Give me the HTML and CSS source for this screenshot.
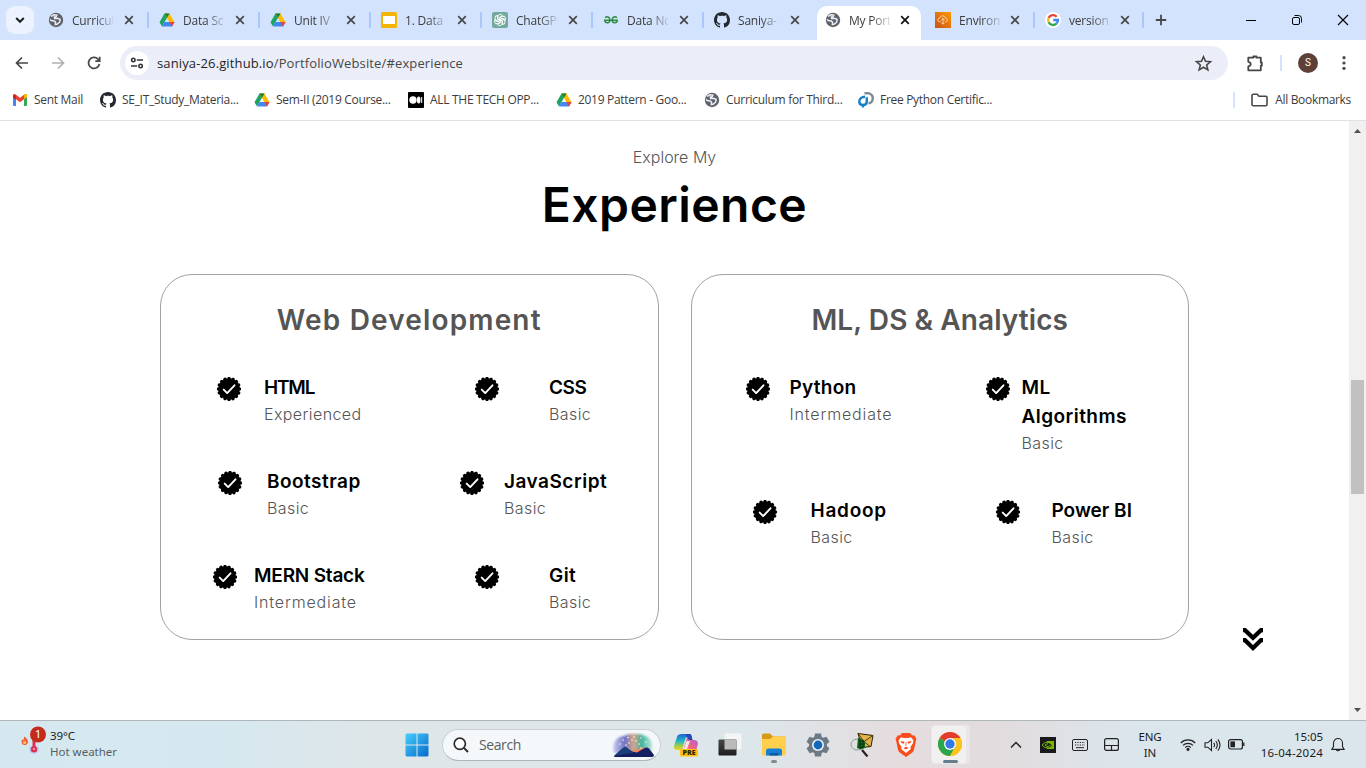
FILE: index.html
```html
<!DOCTYPE html>
<html lang="en">
<head>
<meta charset="utf-8">
<title>My Portfolio</title>
<link rel="stylesheet" href="styles.css">
</head>
<body>
<svg class="defs" width="0" height="0">
  <defs>
    <symbol id="globe" viewBox="0 0 16 16"><circle cx="8" cy="8" r="7.2" fill="#5f6368"/><path d="M3 4.4l3-1.6 2.800.4-.8 1.800H6.400l.2 1.600h4l1.600 1-.6 2.600-2.600 2.200-1.600.2.200-2.200-1.400-1.400-3-.4-1-1.400" fill="none" stroke="#e9edf7" stroke-width="1.5"/></symbol>
    <symbol id="drive" viewBox="0 0 16 16"><path d="M5.5 1.5h5L8 5.8 3 14.5.5 10.2z" fill="#1ea362"/><path d="M5.5 1.5h5l5 8.8h-5z" fill="#ffba00"/><path d="M3 14.5l2.5-4.4h10L13 14.5z" fill="#4285f4"/><path d="M5.5 1.5h5L8 5.8z" fill="#188038"/><path d="M10.4 10.1h5.1L13 14.5z" fill="#ea4335"/></symbol>
    <symbol id="github" viewBox="0 0 16 16"><path fill="#24292f" d="M8 0C3.58 0 0 3.58 0 8c0 3.54 2.29 6.53 5.47 7.59.4.07.55-.17.55-.38 0-.19-.01-.82-.01-1.49-2.01.37-2.53-.49-2.69-.94-.09-.23-.48-.94-.82-1.13-.28-.15-.68-.52-.01-.53.63-.01 1.08.58 1.23.82.72 1.21 1.87.87 2.33.66.07-.52.28-.87.51-1.07-1.78-.2-3.64-.89-3.64-3.95 0-.87.31-1.59.82-2.15-.08-.2-.36-1.02.08-2.12 0 0 .67-.21 2.2.82.64-.18 1.32-.27 2-.27s1.36.09 2 .27c1.53-1.04 2.2-.82 2.2-.82.44 1.1.16 1.92.08 2.12.51.56.82 1.27.82 2.15 0 3.07-1.87 3.75-3.65 3.95.29.25.54.73.54 1.48 0 1.07-.01 1.93-.01 2.2 0 .21.15.46.55.38A8.01 8.01 0 0016 8c0-4.42-3.58-8-8-8z"/></symbol>
    <symbol id="close" viewBox="0 0 10 10"><path d="M1.2 1.2l7.6 7.6M8.8 1.2L1.2 8.8" fill="none" stroke="currentColor" stroke-width="1.7"/></symbol>
    <symbol id="badge" viewBox="0 0 24 24"><circle cx="12" cy="12" r="10.7"/><circle cx="12" cy="12" r="10.4" fill="none" stroke="#000" stroke-width="3.4" pathLength="16" stroke-dasharray=".01 .99" stroke-linecap="round"/><path d="M6.7 12.6l3.500 3.500 7.300-7.800" fill="none" stroke="#fff" stroke-width="1.9" stroke-linecap="round" stroke-linejoin="round"/></symbol>
  </defs>
</svg>

<header class="browser">
  <div class="tabstrip">
    <span class="tab-search"><svg width="10" height="8" viewBox="0 0 10 8"><path d="M1.2 2l3.8 3.8L8.8 2" fill="none" stroke="#1f1f1f" stroke-width="2"/></svg></span>
    <nav class="tabs">
      <div class="tab"><svg class="fav"><use href="#globe"/></svg><span class="tab-title">Curricul</span><svg class="x"><use href="#close"/></svg></div>
      <div class="tab"><svg class="fav"><use href="#drive"/></svg><span class="tab-title">Data Sc</span><svg class="x"><use href="#close"/></svg></div>
      <div class="tab"><svg class="fav"><use href="#drive"/></svg><span class="tab-title">Unit IV</span><svg class="x"><use href="#close"/></svg></div>
      <div class="tab"><svg class="fav" viewBox="0 0 16 16"><rect width="16" height="16" rx="1.5" fill="#f5b400"/><rect x="2" y="4" width="12" height="8" fill="#fff"/></svg><span class="tab-title">1. Data</span><svg class="x"><use href="#close"/></svg></div>
      <div class="tab"><svg class="fav" viewBox="0 0 16 16"><rect width="16" height="16" rx="2" fill="#74aa9c"/><g fill="none" stroke="#fff" stroke-width=".9"><path id="petal" d="M6 8V4.7A2.5 2.5 0 0 1 10.6 3.5L7.8 5.1V8.8"/><use href="#petal" transform="rotate(60 8 8)"/><use href="#petal" transform="rotate(120 8 8)"/><use href="#petal" transform="rotate(180 8 8)"/><use href="#petal" transform="rotate(240 8 8)"/><use href="#petal" transform="rotate(300 8 8)"/></g></svg><span class="tab-title">ChatGP</span><svg class="x"><use href="#close"/></svg></div>
      <div class="tab"><svg class="fav" viewBox="0 0 16 16"><path d="M2.200 5.800C3.400 4.200 6.900 4.600 6.900 8c0 3.600-4.800 3.700-5.200.4M1 8.300h14M14.300 8.400c-.4 3.300-5.200 3.200-5.200-.4 0-3.400 3.500-3.800 4.700-2.200" fill="none" stroke="#2f8d46" stroke-width="1.500"/></svg><span class="tab-title">Data No</span><svg class="x"><use href="#close"/></svg></div>
      <div class="tab"><svg class="fav"><use href="#github"/></svg><span class="tab-title">Saniya-</span><svg class="x"><use href="#close"/></svg></div>
      <div class="tab tab--active"><svg class="fav"><use href="#globe"/></svg><span class="tab-title">My Port</span><svg class="x"><use href="#close"/></svg></div>
      <div class="tab tab--env"><svg class="fav" viewBox="0 0 16 16"><defs><linearGradient id="aws" x1="0" y1="1" x2="1" y2="0"><stop stop-color="#c8511b"/><stop offset="1" stop-color="#f90"/></linearGradient></defs><rect width="16" height="16" fill="url(#aws)"/><path d="M5.500 9.700H4.600a1.800 1.800 0 0 1 .1-3.600C5 3.300 9.400 3.100 10.100 5.700c2.300-.2 3 3.500.8 4H10.200M8 6.500v5.600M6.400 8.100L8 6.500l1.600 1.600M6.500 10.700L8 12.200l1.500-1.500" fill="none" stroke="#ffe9d0" stroke-width=".8"/></svg><span class="tab-title">Environ</span><svg class="x"><use href="#close"/></svg></div>
      <div class="tab tab--last"><svg class="fav" viewBox="0 0 16 16"><circle cx="8" cy="8" r="8" fill="#fff"/><g fill="none" stroke-width="2.3"><path d="M11.700 4.700A5 5 0 0 0 3.600 5.900" stroke="#ea4335"/><path d="M3.600 5.900a5 5 0 0 0 0 4.400" stroke="#fbbc05"/><path d="M3.600 10.300A5 5 0 0 0 11.400 11.700" stroke="#34a853"/><path d="M11.400 11.700A5 5 0 0 0 13 8H8.200" stroke="#4285f4"/></g></svg><span class="tab-title">version</span><svg class="x"><use href="#close"/></svg></div>
    </nav>
    <svg class="new-tab" width="12" height="12" viewBox="0 0 12 12"><path d="M6 .8v10.400M.8 6h10.400" stroke="#474747" stroke-width="1.8"/></svg>
    <div class="window-buttons">
      <svg width="12" height="12"><path d="M1 6.500h10" stroke="#000"/></svg>
      <svg width="12" height="12" fill="none" stroke="#000"><rect x="1.500" y="3.500" width="7" height="7" rx="1.500"/><path d="M3.500 1.500h4a3 3 0 0 1 3 3v4"/></svg>
      <svg width="12" height="12"><path d="M1 1l10 10M11 1L1 11" stroke="#000" stroke-width="1.100"/></svg>
    </div>
  </div>

  <div class="toolbar">
    <svg class="nav-icon" viewBox="0 0 14 14"><path d="M13 7H1.500M7 1.500L1.500 7 7 12.500" fill="none" stroke="#474747" stroke-width="1.700"/></svg>
    <svg class="nav-icon" viewBox="0 0 14 14"><path d="M1 7h11.500M7 1.500L12.500 7 7 12.500" fill="none" stroke="#b0b0b0" stroke-width="1.700"/></svg>
    <svg class="nav-icon" viewBox="0 0 14 14"><path d="M12.400 8A5.500 5.500 0 1 1 11 3.100l1.400 1.500M12.700.8v4.400H8.300" fill="none" stroke="#474747" stroke-width="1.700"/></svg>
    <div class="omnibox">
      <span class="site-info"><svg width="14" height="12" viewBox="0 0 14 12" fill="none" stroke="#30343a" stroke-width="1.600"><circle cx="3.300" cy="3" r="1.700"/><path d="M6.800 3H13M1 9h6.200"/><circle cx="10.600" cy="9" r="1.700"/></svg></span>
      <span class="url"><b>saniya-26.github.io</b>/PortfolioWebsite/#experience</span>
      <svg class="star" viewBox="0 0 16 16"><path d="M8 1.600l1.900 4.300 4.700.4-3.600 3.100 1.100 4.600L8 11.500 3.900 14 5 9.400 1.400 6.300l4.700-.4z" fill="none" stroke="#474747" stroke-width="1.500"/></svg>
    </div>
    <svg class="puzzle" viewBox="0 0 18 18"><path d="M2.300 3.700H7.300V2.500h3.200v1.200h4.300v4.800h1v3.200h-1v4.600H2.300v-3.900q2.400-.4 2.400-2.300T2.300 7.800z" fill="none" stroke="#474747" stroke-width="1.800" stroke-linejoin="round"/></svg>
    <i class="toolbar-sep"></i>
    <span class="avatar">S</span>
    <svg class="kebab" viewBox="0 0 4 14"><circle cx="2" cy="1.700" r="1.600"/><circle cx="2" cy="7" r="1.600"/><circle cx="2" cy="12.300" r="1.600"/></svg>
  </div>

  <div class="bookmarks">
    <a class="bm bm--mail"><svg class="fav" viewBox="0 0 16 16"><path d="M1 3.500h3V14H2a1 1 0 0 1-1-1z" fill="#4285f4"/><path d="M12 3.500h3V13a1 1 0 0 1-1 1h-2z" fill="#34a853"/><path d="M1 3.200c0-1.200 1.500-1.600 2.300-1L8 5.800l4.700-3.600c.8-.6 2.300-.2 2.300 1V5L8 10.300 1 5z" fill="#ea4335"/><path d="M12 2.700l.7-.5c.8-.6 2.300-.2 2.300 1V5l-3 2.300z" fill="#fbbc04"/><path d="M1 3.500v2l3 2.200V3z" fill="#c5221f"/></svg><span>Sent Mail</span></a>
    <a class="bm bm--study"><svg class="fav"><use href="#github"/></svg><span>SE_IT_Study_Materia...</span></a>
    <a class="bm bm--sem"><svg class="fav"><use href="#drive"/></svg><span>Sem-II (2019 Course...</span></a>
    <a class="bm bm--tech"><svg class="fav" viewBox="0 0 16 16"><rect width="16" height="16" rx="1"/><g fill="#fff"><circle cx="5" cy="8" r="3.700"/><ellipse cx="10.700" cy="8" rx="1.800" ry="3.500"/><rect x="13.200" y="5" width="1" height="6"/></g></svg><span>ALL THE TECH OPP...</span></a>
    <a class="bm bm--pattern"><svg class="fav"><use href="#drive"/></svg><span>2019 Pattern - Goo...</span></a>
    <a class="bm bm--third"><svg class="fav"><use href="#globe"/></svg><span>Curriculum for Third...</span></a>
    <a class="bm bm--python"><svg class="fav" viewBox="0 0 16 16" fill="none" stroke-width="2.400"><path d="M6.500 1.500c3.500-1 8.300 0 8.300 4.800 0 3-2 4.900-4.300 4.900" stroke="#808890"/><path d="M7 4.700C3.500 4.700 1.300 6.800 1.300 9.500c0 2 1.500 3.500 3.700 3.500 2.500 0 3.800-1.500 3.800-3.500V5.200M5 15.500V13" stroke="#1681c4"/></svg><span>Free Python Certific...</span></a>
    <div class="all-bookmarks"><svg width="17" height="14" viewBox="0 0 17 14"><path d="M1 2.400q0-1.200 1.200-1.200h4L8 3.200h6.800q1.200 0 1.200 1.200v7.200q0 1.200-1.200 1.200H2.200Q1 12.800 1 11.600z" fill="none" stroke="#474747" stroke-width="1.600"/></svg><span>All Bookmarks</span></div>
  </div>
</header>

<div class="viewport">
  <main class="experience">
    <p class="eyebrow">Explore My</p>
    <h1>Experience</h1>
    <div class="cards">
      <section class="card">
        <h2 class="t-web">Web Development</h2>
        <div class="skills">
          <article class="skill s-html"><svg class="check"><use href="#badge"/></svg><div><h3>HTML</h3><p>Experienced</p></div></article>
          <article class="skill s-css"><svg class="check"><use href="#badge"/></svg><div><h3>CSS</h3><p>Basic</p></div></article>
          <article class="skill s-bootstrap"><svg class="check"><use href="#badge"/></svg><div><h3>Bootstrap</h3><p>Basic</p></div></article>
          <article class="skill s-js"><svg class="check"><use href="#badge"/></svg><div><h3>JavaScript</h3><p>Basic</p></div></article>
          <article class="skill s-mern"><svg class="check"><use href="#badge"/></svg><div><h3>MERN Stack</h3><p class="wide">Intermediate</p></div></article>
          <article class="skill s-git"><svg class="check"><use href="#badge"/></svg><div><h3>Git</h3><p>Basic</p></div></article>
        </div>
      </section>
      <section class="card">
        <h2 class="t-ml">ML, DS &amp; Analytics</h2>
        <div class="skills">
          <article class="skill s-python"><svg class="check"><use href="#badge"/></svg><div><h3>Python</h3><p class="wide">Intermediate</p></div></article>
          <article class="skill s-ml"><svg class="check"><use href="#badge"/></svg><div><h3>ML<br>Algorithms</h3><p>Basic</p></div></article>
          <article class="skill s-hadoop"><svg class="check"><use href="#badge"/></svg><div><h3>Hadoop</h3><p>Basic</p></div></article>
          <article class="skill s-power"><svg class="check"><use href="#badge"/></svg><div><h3>Power BI</h3><p>Basic</p></div></article>
        </div>
      </section>
    </div>
    <svg class="down" viewBox="0 0 24 24"><path d="M2 2.200h2L12 9.800 20 2.200h2M2 12.200h2l8 7.800 8-7.800h2" fill="none" stroke="#000" stroke-width="4.200"/></svg>
  </main>
  <div class="scrollbar"><svg width="9" height="5"><path d="M1 5L4.500 1 8 5z" fill="#505050"/></svg><i class="thumb"></i><svg width="9" height="5"><path d="M1 0h7L4.500 4z" fill="#505050"/></svg></div>
</div>

<footer class="taskbar">
  <div class="weather">
    <svg width="30" height="32" viewBox="0 0 30 32"><path d="M4.500 11.500c2 1.500 4 3.500 3.500 6-.5 2-2 2.500-3.500 2.500S1.500 19 1.500 16.500c0-1 .6-1.700 1-2.200l1 1c.3-1.500.3-2.600 1-3.800z" fill="#f2603c"/><circle cx="4.700" cy="17.500" r="1.600" fill="#ffc069"/><circle cx="14" cy="24" r="5" fill="#b9d2f3"/><rect x="11" y="8" width="6" height="16" rx="3" fill="#d5e4f8"/><path d="M14 12v12" stroke="#dc3150" stroke-width="3"/><circle cx="14" cy="24.200" r="3.200" fill="#dc3150"/><circle cx="14" cy="24" r="1.100" fill="#f9b5be"/><circle cx="18" cy="9.500" r="8" fill="#c42b1c"/></svg>
    <span class="count">1</span>
    <div class="weather-text"><p class="temp">39°C</p><p class="cond">Hot weather</p></div>
  </div>
  <div class="apps">
    <svg class="app" viewBox="0 0 24 24"><defs><linearGradient id="win" x1="0" y1="0" x2="1" y2="1"><stop stop-color="#45cffb"/><stop offset="1" stop-color="#0669cb"/></linearGradient></defs><path d="M1.500.5H11.500v11H.5v-10zM12.500.5h10l1 1v10h-11zM.5 12.500h11v11h-10l-1-1zM12.500 12.500h11v10l-1 1h-10z" fill="url(#win)"/></svg>
    <div class="search"><svg width="16" height="16" viewBox="0 0 16 16"><circle cx="6.800" cy="6.800" r="5.600" fill="#fff" stroke="#2b2b2b" stroke-width="1.700"/><path d="M10.900 10.900L15 15" stroke="#2b2b2b" stroke-width="2"/></svg><span>Search</span>
      <svg class="scene" viewBox="0 0 44 26"><defs><linearGradient id="sky"><stop stop-color="#c9c8ee"/><stop offset=".3" stop-color="#6a74c4"/><stop offset=".52" stop-color="#d9a58c"/><stop offset=".72" stop-color="#3fb3a0"/><stop offset="1" stop-color="#bfeae4"/></linearGradient><filter id="soft"><feGaussianBlur stdDeviation="1"/></filter></defs><path d="M3 21C0 11 6 4 13 4 18 1 29 1 34 4c7 2 9 9 6 17z" fill="url(#sky)" filter="url(#soft)"/><path d="M19 19l8-2 8-2-4 6z" fill="#f28361"/><path d="M3 24l9-8q2-1.500 4 0l5 3.500 5 1 7-4q3-2 5 0l5 6.500q0 2-2 2H4q-1 0-1-1z" fill="#141f63"/><path d="M3 24l9-8q2-1.500 4 0l5 3.500 2 1.500-8 1z" fill="#173f78"/><g fill="#fff3c6"><circle cx="12" cy="8" r=".8"/><circle cx="17" cy="5.500" r=".8"/><circle cx="23" cy="5" r=".8"/><circle cx="30" cy="6" r=".8"/><circle cx="35" cy="10" r=".8"/><circle cx="9" cy="12" r=".8"/><circle cx="18" cy="11" r=".8"/><circle cx="25" cy="9" r=".8"/><circle cx="28" cy="12" r=".8"/><circle cx="21" cy="8" r=".8"/><circle cx="30" cy="16" r=".8"/><circle cx="15" cy="13" r=".8"/></g></svg>
    </div>
    <svg class="app copilot" viewBox="0 0 24 24"><defs><linearGradient id="cp" x1="0" y1="0" x2="0" y2="1"><stop stop-color="#1965d4"/><stop offset=".45" stop-color="#24b9c5"/><stop offset=".75" stop-color="#a1cf43"/><stop offset="1" stop-color="#f6cd30"/></linearGradient><linearGradient id="cq" x1="1" y1="0" x2="0" y2="1"><stop stop-color="#9d62ef"/><stop offset=".6" stop-color="#f2647b"/><stop offset="1" stop-color="#f99a4d"/></linearGradient></defs><path d="M8 1h7c2 0 2.500 1 3 3h-4c-2 0-2.500 1-3 3L9 14c-.6 2-1 3-3 3H3c-3 0-3.500-2-2.700-5L3 4c.8-2.300 2-3 5-3z" fill="url(#cp)"/><path d="M14 4h3l1.500 3H20c3 0 4.500 2 3.700 5L22 18H9l3-10c.5-2 1-4 2-4z" fill="url(#cq)"/><path d="M12.500 8h3.500l-3 8H10z" fill="#f8e3ee"/><path d="M11 1h4c2 0 2.500 1 3.500 6H15z" fill="#2448b8"/><rect x="6" y="16" width="18" height="7.500" rx="1.500" fill="#ffc20e"/><text x="15" y="22.300" text-anchor="middle">PRE</text></svg>
    <svg class="app" viewBox="0 0 24 24"><defs><linearGradient id="dk" x1="0" y1="0" x2="0" y2="1"><stop stop-color="#484848"/><stop offset="1" stop-color="#1c1c1c"/></linearGradient></defs><rect x="6.500" y=".5" width="17" height="16" rx="1" fill="#f5f5f5"/><rect x=".5" y="6.500" width="18" height="16" rx="1" fill="url(#dk)"/><path d="M6.500 6.500h12v10h-12z" fill="#bababa"/></svg>
    <svg class="app" viewBox="0 0 24 24"><path d="M0 2q0-1.500 1.500-1.500H8L11 3.500h11.500Q24 3.500 24 5v7H0z" fill="#d59b14"/><path d="M0 6h8l3-2.500h11.500Q24 3.500 24 5v16q0 1.500-1.500 1.500h-21Q0 22.500 0 21z" fill="#ffcf4d"/><path d="M4 22.500V18q0-2.500 2.500-2.500h11q2.500 0 2.500 2.500v4.500z" fill="#1780d6"/><path d="M7.500 20h9v2.500h-9z" fill="#0b5ca8"/></svg>
    <svg class="app" viewBox="0 0 24 24"><g fill="#6d7985"><circle cx="12" cy="12" r="9"/><path id="tooth" d="M9 0.500h6l1 5H8z"/><use href="#tooth" transform="rotate(60 12 12)"/><use href="#tooth" transform="rotate(120 12 12)"/><use href="#tooth" transform="rotate(180 12 12)"/><use href="#tooth" transform="rotate(240 12 12)"/><use href="#tooth" transform="rotate(300 12 12)"/></g><circle cx="12" cy="12" r="6" fill="#edf1f4"/><circle cx="12" cy="12" r="4.400" fill="#1269b7"/></svg>
    <svg class="app" viewBox="0 0 24 24"><path d="M8 .5l15 2-2 11-9 1z" fill="#e3b24d" stroke="#27220e"/><path d="M8 .5l6 8 9-6M14 8.500l6 5" fill="none" stroke="#51410e"/><ellipse cx="7" cy="11.500" rx="6" ry="5.500" fill="#dce2dd" stroke="#8c9a91"/><path d="M8 5l3 1 4 3v6l-4 1.500L7 15z" fill="#176923"/><path d="M8 8h6M8 11h7M8 14h6M10 5v11M13 7v8" stroke="#082c0e" stroke-width=".8"/><path d="M12 17l5.500 6.500" stroke="#222" stroke-width="2.200"/></svg>
    <svg class="app" viewBox="0 0 24 24"><path d="M8 0h8l2.200 2.400 2-.2 2.300 3.800-.7 2-1.800 8.800q-.5 2-2 3L12 24l-6-4.200q-1.500-1-2-3L2.200 8l-.7-2 2.300-3.800 2 .2z" fill="#fb4c1b"/><path d="M7 4.300l3 .8h4l3-.8 2.500 3.200-.7 3-2.300 3.500.3 2-4.800 4-4.800-4 .3-2-2.300-3.500-.7-3z" fill="#fff"/><path d="M6.500 8l4 .8-.5 2-2.500-.8zM17.500 8l-4 .8.5 2 2.500-.8zM9.500 15l2.500-1.300 2.500 1.300-2.500 1.600zM11.600 9h.8v4h-.8z" fill="#fb4c1b"/></svg>
    <span class="chrome-tile"><svg class="app" viewBox="0 0 24 24"><circle cx="12" cy="12" r="12" fill="#fcc31e"/><path d="M12 12L1.600 6A12 12 0 0 1 22.400 6z" fill="#e33b2e"/><path d="M12 12L1.600 6A12 12 0 0 0 12 24l5-9z" fill="#2da44e"/><path d="M12 6h10.400A12 12 0 0 1 12 24l5.200-9z" fill="#fcc31e"/><circle cx="12" cy="12" r="6" fill="#fff"/><circle cx="12" cy="12" r="4.700" fill="#3478e5"/></svg></span>
  </div>
  <div class="tray">
    <svg class="t-up" width="12" height="8" viewBox="0 0 12 8"><path d="M1 6.500l5-5 5 5" fill="none" stroke="#222" stroke-width="1.500"/></svg>
    <svg class="t-nv" width="16" height="16" viewBox="0 0 16 16"><rect width="16" height="16" fill="#1a1a1a"/><path d="M7 4h7v8H7v-1.500c2 .3 3.600-.7 4.800-2C10.600 6.800 9 5.800 7 5.700z" fill="#76b900"/><path d="M7.500 5.200C5 5.200 3.200 6.500 2.200 8c1 1.700 2.800 3 5.300 3M8 6.800C6.500 6.800 5.500 7.300 4.900 8c.6.900 1.600 1.500 3.100 1.500 1 0 1.700-.6 2.200-1.300" fill="none" stroke="#76b900" stroke-width="1"/></svg>
    <svg class="t-kb" width="16" height="12" viewBox="0 0 16 12" fill="none" stroke="#222"><rect x=".5" y=".5" width="15" height="11" rx="1.500"/><path d="M3 3.500h10M3 6h10" stroke-dasharray="1.200 1.200" stroke-width="1.200"/><path d="M4 8.700h8"/></svg>
    <svg class="t-tp" width="15" height="13" viewBox="0 0 15 13" fill="none" stroke="#222" stroke-width="1.200"><rect x=".6" y=".6" width="13.800" height="11.800" rx="2"/><path d="M.6 7.500h13.800M7.500 7.500v5"/></svg>
    <div class="lang">ENG<br>IN</div>
    <svg class="t-wifi" width="16" height="13" viewBox="0 0 16 13" fill="none" stroke="#222" stroke-width="1.200"><path d="M.8 5a10 10 0 0 1 14.400 0M3 7.400a7 7 0 0 1 10 0M5.200 9.600a4 4 0 0 1 5.600 0"/><circle cx="8" cy="11.300" r="1" fill="#222"/></svg>
    <svg class="t-vol" width="17" height="14" viewBox="0 0 17 14" fill="none" stroke="#222" stroke-width="1.100"><path d="M1 4.800h2.700L7.500 1.500v11L3.700 9.200H1zM9.700 4.800q1.700 2.200 0 4.400M11.800 3q3 4 0 8M13.900 1.300q4.200 5.700 0 11.400"/></svg>
    <svg class="t-bat" width="17" height="11" viewBox="0 0 17 11"><rect x=".6" y=".6" width="13.800" height="9.400" rx="2" fill="none" stroke="#222" stroke-width="1.200"/><rect x="2.400" y="2.400" width="4.600" height="5.800" fill="#222"/><path d="M15.800 3.500v3.500" stroke="#222" stroke-width="1.300"/></svg>
    <div class="clock"><span class="hm">15:05</span><br><span class="date">16-04-2024</span></div>
    <svg class="t-bell" width="14" height="16" viewBox="0 0 14 16" fill="none" stroke="#222" stroke-width="1.100"><path d="M2.500 6a4.500 4.500 0 0 1 9 0v3.500l1.700 2.900H.8l1.700-2.900zM5.200 12.500a1.900 1.900 0 0 0 3.600 0"/></svg>
  </div>
</footer>
</body>
</html>
```
FILE: styles.css
```css
* { box-sizing: border-box; }
body { margin: 0; width: 1366px; height: 768px; overflow: hidden; background: #fff; font: 12px/16px "Open Sans", "Noto Sans", sans-serif; color: #3c3c3c; display: flex; flex-direction: column; }
p, h1, h2, h3 { margin: 0; }
svg { display: block; flex: none; }
.defs { position: absolute; }
.fav { width: 16px; height: 16px; }

/* Browser chrome */
.browser { height: 121px; border-bottom: 1px solid #dfe1e5; background: #fff; flex: none; }
.tabstrip { height: 40px; background: #d3e3fd; display: flex; align-items: center; }
.tab-search { width: 28px; height: 28px; margin: 0 4px 0 6px; border-radius: 9px; background: #ecf3fe; display: grid; place-items: center; }
.tabs { display: flex; height: 40px; }
.tab { width: 111px; height: 40px; padding-left: 10px; display: flex; align-items: center; position: relative; }
.tab::after { content: ""; position: absolute; right: 0; top: 12px; width: 2px; height: 16px; background: #a8c7fa; }
.tab:nth-child(7)::after, .tab--active::after { display: none; }
.tab--last { width: 109px; }
.tab-title { width: 41px; margin-left: 8px; padding-top: 1px; white-space: nowrap; letter-spacing: -.2px; -webkit-mask-image: linear-gradient(90deg, #000 55%, rgba(0,0,0,.15)); mask-image: linear-gradient(90deg, #000 55%, rgba(0,0,0,.15)); }
.x { width: 10px; height: 10px; margin-left: 11px; color: #474747; }
.tab--active { width: 109px; }
.tab--active .x { margin-left: 10px; }
.tab--env { padding-left: 11px; }
.tab--env .x { margin-left: 10px; }
.tab--last .x { margin-left: 10px; }
.tab--active::before { content: ""; position: absolute; left: 2px; right: 3px; top: 6px; bottom: 0; background: #fff; border-radius: 10px 10px 0 0; z-index: 0; }
.tab--active > * { position: relative; z-index: 1; }
.tab--active .x { color: #111; }
.new-tab { margin-left: 11px; }
.window-buttons { margin-left: auto; margin-right: 17px; display: flex; gap: 34px; }
.toolbar { height: 46px; padding: 0 20px 0 15px; display: flex; align-items: center; }
.nav-icon { width: 14px; height: 14px; margin-right: 22px; }
.omnibox { width: 1108px; height: 34px; margin-left: -3px; padding: 0 16px 0 5px; border-radius: 17px; background: #ebeef8; display: flex; align-items: center; }
.site-info { width: 24px; height: 24px; border-radius: 50%; background: #fff; display: grid; place-items: center; margin-right: 8px; }
.url { font-size: 13px; letter-spacing: .13px; color: #474747; white-space: nowrap; }
.url b { font-weight: 400; color: #1f1f1f; }
.star { width: 17px; height: 17px; margin-left: auto; }
.puzzle { width: 18px; height: 18px; margin-left: 18px; }
.toolbar-sep { width: 2px; height: 16px; margin: 0 16px 0 16px; background: #d3e3fd; }
.avatar { width: 20px; height: 20px; border-radius: 50%; background: #5d4037; color: #fff; font: 10px/20px Roboto, sans-serif; text-align: center; }
.kebab { width: 4px; height: 14px; margin-left: auto; fill: #474747; }
.bookmarks { height: 28px; display: flex; align-items: center; padding-left: 12px; white-space: nowrap; }
.bm { display: flex; gap: 6px; }
.bm--mail { width: 88px; }
.bm--study, .bm--sem { width: 154px; }
.bm--tech { width: 148px; }
.bm--pattern { width: 148px; }
.bm--third { width: 154px; }
.bm span { letter-spacing: -.3px; }
.all-bookmarks { margin-left: auto; margin-right: 15px; padding-left: 16px; border-left: 2px solid #d3e3fd; display: flex; align-items: center; gap: 7px; letter-spacing: -.32px; }

/* Portfolio page */
.viewport { height: 599px; flex: none; display: flex; }
.experience { width: 1349px; padding-top: 24px; position: relative; font-family: Inter, sans-serif; color: #555; }
.eyebrow { font-size: 16px; line-height: 24px; font-weight: 300; text-align: center; letter-spacing: 0; }
h1 { font-size: 48px; line-height: 72px; font-weight: 600; color: #000; text-align: center; letter-spacing: .45px; }
.cards { display: flex; gap: 32px; margin: 33px 160px 0; }
.card { flex: 1; height: 366px; border: 1px solid #a3a3a3; border-radius: 32px; padding-top: 24px; }
h2 { font-size: 28px; line-height: 42px; font-weight: 600; text-align: center; }
.t-web { letter-spacing: 1.15px; }
.t-ml { letter-spacing: .08px; }
.skills { display: grid; grid-template-columns: 249px 1fr; row-gap: 41px; margin-top: 32px; }
.skill { display: flex; align-items: flex-start; }
.check { width: 24px; height: 24px; margin-top: 4px; overflow: visible; }
h3 { font-size: 19px; line-height: 29px; font-weight: 600; color: #000; white-space: nowrap; }
.skill p { font-size: 16px; line-height: 24px; font-weight: 300; letter-spacing: .4px; }
.skill .wide { letter-spacing: .85px; }
.s-html { padding-left: 56px; gap: 23px; }
.s-html h3 { letter-spacing: -1.2px; }
.s-css, .s-git { padding-left: 65px; gap: 50px; }
.s-css h3 { letter-spacing: -.4px; }
.s-git h3 { letter-spacing: .4px; }
.s-bootstrap { padding-left: 57px; gap: 25px; }
.s-bootstrap h3 { letter-spacing: .47px; }
.s-js { padding-left: 50px; gap: 20px; }
.s-js h3 { letter-spacing: .5px; }
.s-mern { padding-left: 52px; gap: 17px; }
.s-mern h3 { letter-spacing: -.2px; }
.s-python { padding-left: 54px; gap: 20px; }
.s-python h3 { letter-spacing: .25px; }
.s-ml { padding-left: 45px; gap: 12px; }
.s-ml h3 { letter-spacing: .45px; }
.s-hadoop { padding-left: 61px; gap: 34px; }
.s-hadoop h3 { letter-spacing: .75px; }
.s-power { padding-left: 55px; gap: 32px; }
.down { position: absolute; left: 1241px; top: 507px; width: 24px; height: 24px; }
.scrollbar { width: 17px; background: #f0f0f0; display: flex; flex-direction: column; align-items: center; padding: 7px 0; }
.thumb { width: 13px; height: 114px; margin: 247px 1px auto 0; background: #c1c1c1; }

/* Taskbar */
.taskbar { height: 48px; border-top: 1px solid #aeb6b9; background: linear-gradient(90deg, #d5e8f0 0, #d6e8ef 17%, #dfe6e8 28%, #dde6ea 55%, #e5dcde 66%, #e2dcde 73%, #dbe6ec 83%, #dbe6ec); display: flex; position: relative; font-family: "Noto Sans", sans-serif; color: #1b1b1b; }
.weather { width: 395px; padding: 4px 0 0 20px; display: flex; position: relative; font-size: 11.5px; }
.count { position: absolute; left: 34px; top: 5px; width: 8px; color: #fff; text-align: center; }
.weather-text { padding-top: 3px; }
.temp { letter-spacing: -.1px; }
.cond { color: #555f64; }
.apps { display: flex; align-items: center; height: 47px; padding-left: 10px; }
.app { width: 24px; height: 24px; margin-right: 20px; }
.apps > .app:first-child { margin-right: 14px; }
.search { width: 219px; height: 32px; margin: 0 13px 0 -1px; border: 1px solid #c9d1d5; border-bottom-color: #adb6ba; border-radius: 16px; background: #f5f8fa; display: flex; align-items: center; padding: 0 5px 0 10px; color: #5c5f61; font: 14px/20px "Open Sans", sans-serif; }
.search span { margin-left: 10px; letter-spacing: -.4px; }
.scene { width: 44px; height: 26px; margin-left: auto; }
.copilot text { font: 800 7px "Open Sans", sans-serif; fill: #2c2100; }
.chrome-tile { width: 36px; height: 39px; margin-left: -7px; border: 1px solid #e8e6e6; border-radius: 4px; background: #f1eff0; box-shadow: 3px 0 0 #e9e6e7; padding: 6px 5px 6px 6px; position: relative; }
.chrome-tile::after, .apps::after { content: ""; position: absolute; bottom: 0; height: 3px; border-radius: 2px; }
.chrome-tile::after { left: 11px; width: 15px; background: #657d8c; }
.apps::after { left: 771px; bottom: 5px; width: 6px; background: #858b8e; }
.tray { margin-left: auto; height: 47px; display: flex; align-items: center; font-size: 11.5px; margin-right: 21px; }
.t-nv { margin-left: 18px; }
.t-kb { margin-left: 16px; }
.t-tp { margin-left: 16px; }
.lang { width: 40px; margin-left: 11px; text-align: center; letter-spacing: -.1px; }
.t-wifi { margin-left: 10px; }
.t-vol { margin-left: 8px; }
.t-bat { margin-left: 7px; }
.clock { width: 70px; margin-left: 8px; text-align: right; white-space: nowrap; }
.hm { letter-spacing: -.1px; }
.date { letter-spacing: .22px; }
.t-bell { margin-left: 8px; }
```
